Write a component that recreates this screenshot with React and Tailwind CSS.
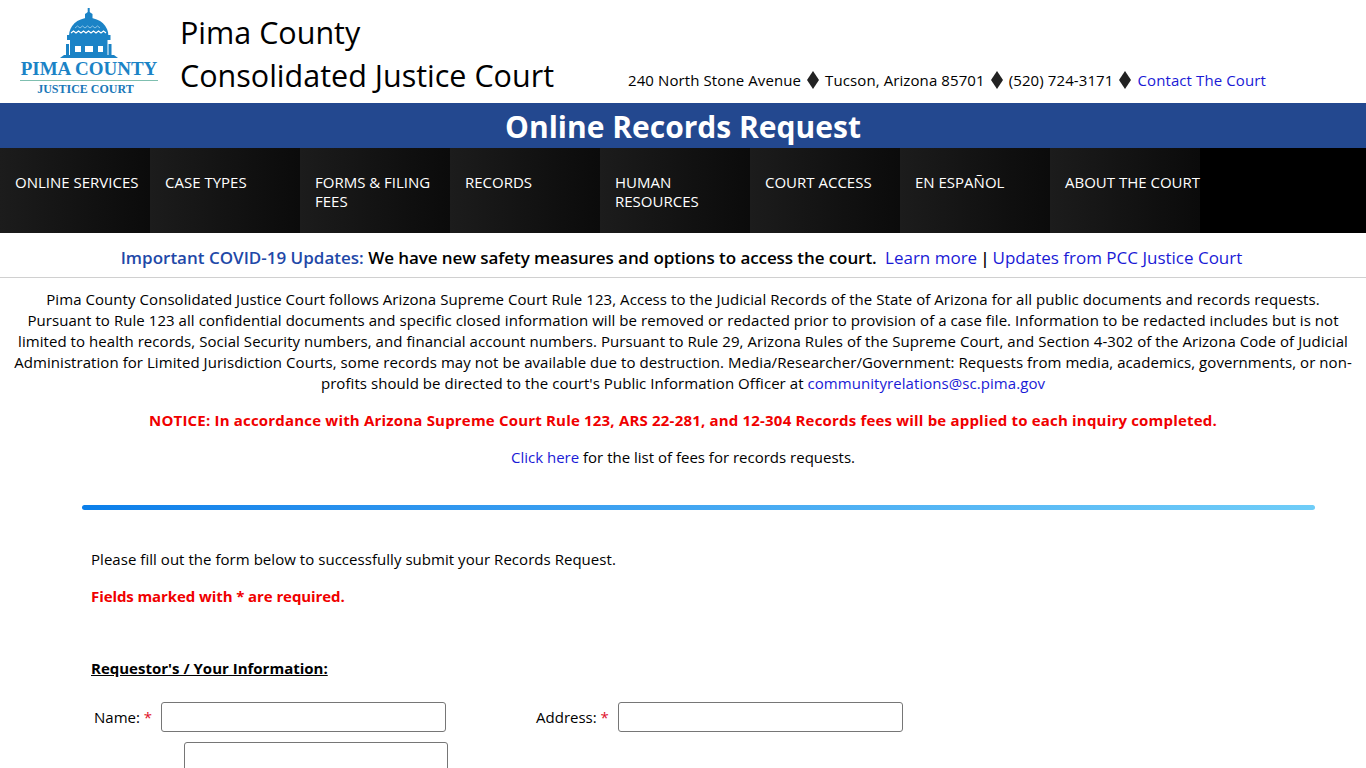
const navItems = [
  'ONLINE SERVICES',
  'CASE TYPES',
  'FORMS & FILING FEES',
  'RECORDS',
  'HUMAN RESOURCES',
  'COURT ACCESS',
  'EN ESPAÑOL',
  'ABOUT THE COURT',
]

const singleLine = ['ONLINE SERVICES', 'ABOUT THE COURT']

function Logo() {
  return (
    <div className="flex w-[138px] flex-col items-center">
      <svg width="138" height="50" viewBox="0 0 138 50" className="block">
        <g fill="#1b83c6">
          <rect x="67.7" y="0" width="2" height="5" />
          <path d="M65 11 V6 L68.7 3.5 L72.5 6 V11 Z" />
          <path d="M49 28 C49 18 57 10 68.7 10 C80.4 10 88.4 18 88.4 28 Z" />
          <rect x="47" y="27" width="43.5" height="5" />
          <rect x="50" y="32" width="37.5" height="15" />
          <rect x="46" y="36" width="3" height="11" />
          <rect x="88.5" y="36" width="3" height="11" />
          <path d="M40 50 L44 47 L94 47 L98 50 Z" />
        </g>
        <path d="M51 25 l2.5 -2 l2.5 2 l2.5 -2 l2.5 2 l2.5 -2 l2.5 2 l2.5 -2 l2.5 2 l2.5 -2 l2.5 2 l2.5 -2 l2.5 2 l2.5 -2 l2.5 2" fill="none" stroke="#fff" strokeWidth="1.2" />
        <path d="M55 20 l2.5 -2 l2.5 2 l2.5 -2 l2.5 2 l2.5 -2 l2.5 2 l2.5 -2 l2.5 2 l2.5 -2 l2.5 2" fill="none" stroke="#8cc4e6" strokeWidth="1" />
        <g fill="#fff">
          <rect x="55" y="38" width="6" height="6" />
          <rect x="65" y="38" width="8" height="6" />
          <rect x="78" y="38" width="5" height="6" />
        </g>
      </svg>
      <div className="font-['Liberation_Serif',serif] text-[19px] leading-[22px] font-bold whitespace-nowrap text-[#1b83c6]">PIMA COUNTY</div>
      <div className="h-px w-full bg-[#7fbfb0]" />
      <div className="mt-px mr-[7px] font-['Liberation_Serif',serif] text-[12px] leading-[14px] font-bold whitespace-nowrap text-[#1b78b8]">JUSTICE COURT</div>
    </div>
  )
}

function Diamond() {
  return (
    <svg width="12" height="18" viewBox="0 0 12 18" className="mx-[6px] inline-block align-[-3px]">
      <path d="M6 0 L12 9 L6 18 L0 9 Z" fill="#222" />
    </svg>
  )
}

function Field({ label, inputWidth }) {
  return (
    <div className="flex items-center">
      <label className="whitespace-nowrap">
        {label}: <span className="text-[#e0102a]">*</span>
      </label>
      <input type="text" className={`ml-[9px] h-[30px] rounded-[3px] border border-[#767676] bg-white ${inputWidth}`} />
    </div>
  )
}

export default function App() {
  return (
    <div className="h-screen overflow-hidden bg-white font-['Open_Sans',sans-serif] text-[15px] text-black">
      <header className="flex h-[103px]">
        <div className="pt-[8px] pl-[20px]">
          <Logo />
        </div>
        <div className="ml-[22px] pt-[11px] text-[30.5px] leading-[43px] whitespace-nowrap">
          <div>Pima County</div>
          <div>Consolidated Justice Court</div>
        </div>
        <div className="ml-[74px] pt-[68px] leading-[24px] tracking-[0.1px] whitespace-nowrap">
          240 North Stone Avenue<Diamond />Tucson, Arizona 85701<Diamond />(520) 724-3171<Diamond />
          <a className="text-[#1a1ad6]">Contact The Court</a>
        </div>
      </header>

      <div className="h-[45px] bg-[#23488f] text-center text-[30px] leading-[47px] font-bold text-white">
        Online Records Request
      </div>

      <nav className="flex h-[85px] bg-black">
        {navItems.map((item) => (
          <div key={item} className="h-full w-[150px] bg-gradient-to-r from-[#1c1c1c] to-[#0b0b0b] px-[15px] pt-[25px] leading-[19px] text-white">
            <span className={singleLine.includes(item) ? 'whitespace-nowrap' : ''}>{item}</span>
          </div>
        ))}
      </nav>

      <div className="h-[45px] border-b border-[#d0d0d0] pr-[3px] text-center text-[17px] leading-[49px] whitespace-nowrap">
        <span className="font-semibold text-[#1f49a8]">Important COVID-19 Updates:</span>{' '}
        <span className="font-semibold tracking-[-0.08px]">We have new safety measures and options to access the court.</span>{' '}
        <a className="ml-1 text-[#1a1ad6]">Learn more</a>
        <span className="mx-[3px] font-semibold">|</span>
        <a className="text-[#1a1ad6]">Updates from PCC Justice Court</a>
      </div>

      <main>
        <p className="mt-[11px] text-center leading-[21px] tracking-[0.06px] whitespace-nowrap">
          Pima County Consolidated Justice Court follows Arizona Supreme Court Rule 123, Access to the Judicial Records of the State of Arizona for all public documents and records requests.<br />
          Pursuant to Rule 123 all confidential documents and specific closed information will be removed or redacted prior to provision of a case file. Information to be redacted includes but is not<br />
          limited to health records, Social Security numbers, and financial account numbers. Pursuant to Rule 29, Arizona Rules of the Supreme Court, and Section 4-302 of the Arizona Code of Judicial<br />
          Administration for Limited Jurisdiction Courts, some records may not be available due to destruction. Media/Researcher/Government: Requests from media, academics, governments, or non-<br />
          profits should be directed to the court's Public Information Officer at{' '}
          <a className="text-[#1a1ad6]">communityrelations@sc.pima.gov</a>
        </p>
        <p className="mt-[16px] text-center leading-[21px] font-bold tracking-[0.19px] text-[#f00000]">
          NOTICE: In accordance with Arizona Supreme Court Rule 123, ARS 22-281, and 12-304 Records fees will be applied to each inquiry completed.
        </p>
        <p className="mt-[16px] text-center leading-[21px]">
          <a className="text-[#1a1ad6]">Click here</a> for the list of fees for records requests.
        </p>

        <div className="mt-[37px] mr-[51px] ml-[82px] h-[5px] rounded-full bg-gradient-to-r from-[#0a7fea] to-[#6fcdf8]" />

        <section className="px-[91px]">
          <p className="mt-[39px] leading-[21px] tracking-[0.04px]">Please fill out the form below to successfully submit your Records Request.</p>
          <p className="mt-[16px] leading-[21px] font-bold tracking-[-0.09px] text-[#f00000]">Fields marked with * are required.</p>
          <h2 className="mt-[51px] leading-[21px] font-bold underline">Requestor's / Your Information:</h2>
          <div className="mt-[23px] flex pl-[3px]">
            <Field label="Name" inputWidth="w-[285px]" />
            <div className="ml-[90px]">
              <Field label="Address" inputWidth="w-[285px]" />
            </div>
          </div>
          <div className="mt-[10px] pl-[93px]">
            <input type="text" className="h-[30px] w-[264px] rounded-[3px] border border-[#767676] bg-white" />
          </div>
        </section>
      </main>
    </div>
  )
}
